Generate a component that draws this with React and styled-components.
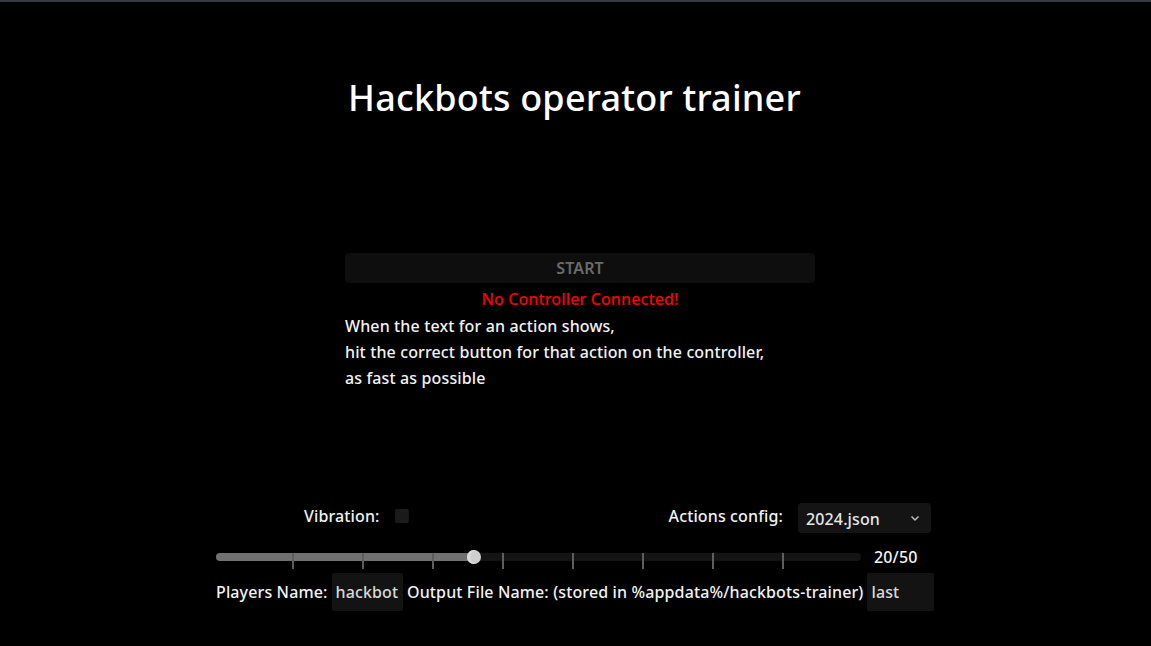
import React from 'react'
import styled, { createGlobalStyle } from 'styled-components'

const GlobalStyle = createGlobalStyle`
  html, body {
    margin: 0;
    padding: 0;
    background: #000;
  }
  body {
    font-family: "Noto Sans", "Open Sans", sans-serif;
    color: #f2f2f2;
    letter-spacing: 0.13px;
  }
`

const ticks = [76, 146, 216, 286, 356, 426, 496, 566]
const TRACK = 645

const App = () => {
  const value = 20
  const max = 50
  const pct = (value / max) * 100

  return (
    <>
      <GlobalStyle />
      <Page>
        <Main>
          <Title>Hackbots operator trainer</Title>
          <StartButton disabled>START</StartButton>
          <Warning>No Controller Connected!</Warning>
          <Instructions>
            When the text for an action shows,
            <br />
            hit the correct button for that action on the controller,
            <br />
            as fast as possible
          </Instructions>
        </Main>

        <Settings>
          <OptionsRow>
            <Option>
              <Label>Vibration:</Label>
              <Checkbox />
            </Option>
            <Option>
              <Label>Actions config:</Label>
              <Select>
                <span>2024.json</span>
                <svg width="12" height="12" viewBox="0 0 12 12">
                  <path d="M2.5 4.5 L6 8 L9.5 4.5" fill="none" stroke="#bdbdbd" strokeWidth="1.5" />
                </svg>
              </Select>
            </Option>
          </OptionsRow>

          <SliderRow>
            <Slider>
              <Track>
                <Fill style={{ width: `${pct}%` }} />
              </Track>
              {ticks.map((t) => (
                <Tick key={t} style={{ left: `${(t / TRACK) * 100}%` }} />
              ))}
              <Thumb style={{ left: `${pct}%` }} />
            </Slider>
            <Count>{value}/{max}</Count>
          </SliderRow>

          <NameRow>
            <Label>Players Name:</Label>
            <TextBox $width={72}>hackbot</TextBox>
            <Label>Output File Name: (stored in %appdata%/hackbots-trainer)</Label>
            <TextBox $width={67}>last</TextBox>
          </NameRow>
        </Settings>
      </Page>
    </>
  )
}

const Page = styled.div`
  width: 100%;
  height: 646px;
  box-sizing: border-box;
  border-top: 2px solid #393c41;
  display: flex;
  flex-direction: column;
  align-items: center;
`

const Main = styled.div`
  width: 470px;
  display: flex;
  flex-direction: column;
  margin-left: 9px;
`

const Title = styled.h1`
  margin: 71px 0 0 -11px;
  font-size: 36px;
  font-weight: 500;
  letter-spacing: 0.2px;
  text-align: center;
  color: #fff;
  line-height: 50px;
`

const StartButton = styled.button`
  margin-top: 130px;
  height: 30px;
  border: none;
  border-radius: 4px;
  background: #0e0e0e;
  color: #6b6b6b;
  font-family: inherit;
  font-size: 16px;
  font-weight: 600;
  letter-spacing: inherit;
`

const Warning = styled.div`
  margin-top: 3px;
  text-align: center;
  color: #f00;
  font-size: 16px;
  font-weight: 500;
  line-height: 26px;
`

const Instructions = styled.p`
  margin: 1px 0 0;
  font-size: 16px;
  font-weight: 500;
  line-height: 26px;
`

const Settings = styled.div`
  width: 718px;
  margin: 110px 1px 0 0;
  display: flex;
  flex-direction: column;
`

const OptionsRow = styled.div`
  display: flex;
  align-items: center;
  justify-content: space-between;
  padding: 0 3px 0 88px;
  height: 30px;
`

const Option = styled.div`
  display: flex;
  align-items: center;
  gap: 15px;
`

const Label = styled.span`
  font-size: 16px;
  font-weight: 500;
  white-space: nowrap;
`

const Checkbox = styled.span`
  width: 14px;
  height: 14px;
  border-radius: 2px;
  background: #1a1a1a;
`

const Select = styled.div`
  width: 133px;
  height: 30px;
  margin-top: 3px;
  box-sizing: border-box;
  padding: 0 10px 0 8px;
  border-radius: 4px;
  background: #141414;
  display: flex;
  align-items: center;
  justify-content: space-between;
  color: #e6e6e6;
  font-size: 16px;
  font-weight: 500;

  span {
    margin-top: 3px;
  }
`

const SliderRow = styled.div`
  margin-top: 11px;
  display: flex;
  align-items: center;
  gap: 13px;
  height: 30px;
`

const Slider = styled.div`
  position: relative;
  width: ${TRACK}px;
  height: 14px;
`

const Track = styled.div`
  position: absolute;
  top: 3px;
  left: 0;
  right: 0;
  height: 8px;
  border-radius: 4px;
  background: #141414;
  overflow: hidden;
`

const Fill = styled.div`
  height: 100%;
  background: #717171;
`

const Tick = styled.span`
  position: absolute;
  top: 3px;
  width: 2px;
  height: 16px;
  background: #5e5e5e;
`

const Thumb = styled.span`
  position: absolute;
  top: 0;
  width: 14px;
  height: 14px;
  margin-left: -7px;
  border-radius: 50%;
  background: #cfcfcf;
  box-shadow: inset 3px 0 0 #dcdcdc;
`

const Count = styled.span`
  font-size: 16px;
  font-weight: 500;
`

const NameRow = styled.div`
  margin-top: 1px;
  display: flex;
  align-items: center;
  gap: 4px;
  height: 38px;
`

const TextBox = styled.div`
  width: ${(p) => p.$width}px;
  height: 38px;
  box-sizing: border-box;
  padding: 0 4px;
  background: #131313;
  border-radius: 2px;
  color: #d9d9d9;
  font-size: 16px;
  font-weight: 500;
  display: flex;
  align-items: center;
`

export default App
